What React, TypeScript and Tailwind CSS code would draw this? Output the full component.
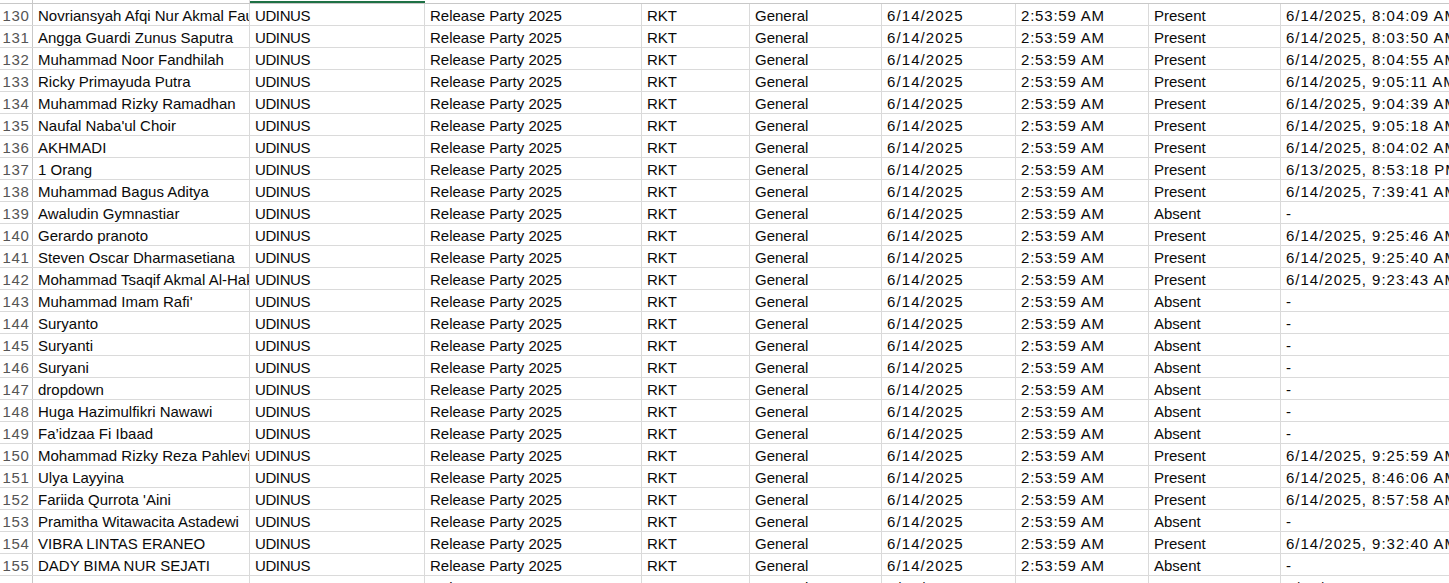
const COLS = [217, 175, 217, 108, 132, 134, 133, 132, 220];

type Row = [number, string, string];

const rows: Row[] = [
  [130, "Novriansyah Afqi Nur Akmal Fauzi", "6/14/2025, 8:04:09 AM"],
  [131, "Angga Guardi Zunus Saputra", "6/14/2025, 8:03:50 AM"],
  [132, "Muhammad Noor Fandhilah", "6/14/2025, 8:04:55 AM"],
  [133, "Ricky Primayuda Putra", "6/14/2025, 9:05:11 AM"],
  [134, "Muhammad Rizky Ramadhan", "6/14/2025, 9:04:39 AM"],
  [135, "Naufal Naba'ul Choir", "6/14/2025, 9:05:18 AM"],
  [136, "AKHMADI", "6/14/2025, 8:04:02 AM"],
  [137, "1 Orang", "6/13/2025, 8:53:18 PM"],
  [138, "Muhammad Bagus Aditya", "6/14/2025, 7:39:41 AM"],
  [139, "Awaludin Gymnastiar", "-"],
  [140, "Gerardo pranoto", "6/14/2025, 9:25:46 AM"],
  [141, "Steven Oscar Dharmasetiana", "6/14/2025, 9:25:40 AM"],
  [142, "Mohammad Tsaqif Akmal Al-Hakim", "6/14/2025, 9:23:43 AM"],
  [143, "Muhammad Imam Rafi'", "-"],
  [144, "Suryanto", "-"],
  [145, "Suryanti", "-"],
  [146, "Suryani", "-"],
  [147, "dropdown", "-"],
  [148, "Huga Hazimulfikri Nawawi", "-"],
  [149, "Fa’idzaa Fi Ibaad", "-"],
  [150, "Mohammad Rizky Reza Pahlevi", "6/14/2025, 9:25:59 AM"],
  [151, "Ulya Layyina", "6/14/2025, 8:46:06 AM"],
  [152, "Fariida Qurrota 'Aini", "6/14/2025, 8:57:58 AM"],
  [153, "Pramitha Witawacita Astadewi", "-"],
  [154, "VIBRA LINTAS ERANEO", "6/14/2025, 9:32:40 AM"],
  [155, "DADY BIMA NUR SEJATI", "-"],
  [156, "NAFIZAH ANBAR SYA'BANI", "6/14/2025, 8:58:48 AM"],
];

function Cell({ w, className = "", children }: { w: number; className?: string; children: React.ReactNode }) {
  return (
    <div
      className={`h-full shrink-0 overflow-hidden whitespace-nowrap border-r border-[#dadada] pl-[5px] pt-[1px] leading-[21px] ${className}`}
      style={{ width: w }}
    >
      {children}
    </div>
  );
}

export default function App() {
  return (
    <div className="h-[583px] w-[1449px] overflow-hidden bg-white font-['Liberation_Sans',Arial,sans-serif] text-[15px] text-[#0a0a0a]">
      {/* bottom edge of the column headers */}
      <div className="flex h-[4px] border-b border-[#c8c8c8]">
        <div className="w-[33px] shrink-0 border-r border-[#c8c8c8]" />
        <div className="w-[217px] shrink-0 border-r border-[#dadada]" />
        <div className="flex w-[175px] shrink-0 flex-col">
          <div className="h-[1px]" />
          <div className="h-[2px] bg-[#1e7145]" />
        </div>
        <div className="flex-1" />
      </div>
      {rows.map(([n, name, time]) => {
        const present = time !== "-";
        return (
          <div key={n} className="flex h-[22px] border-b border-[#dadada]">
            <div className="w-[33px] shrink-0 border-r border-[#c8c8c8] pt-[1px] text-center leading-[21px] tracking-[0.6px] text-[#555]">
              {n}
            </div>
            <Cell w={COLS[0]}>{name}</Cell>
            <Cell w={COLS[1]} className="tracking-[-0.4px]">UDINUS</Cell>
            <Cell w={COLS[2]}>Release Party 2025</Cell>
            <Cell w={COLS[3]}>RKT</Cell>
            <Cell w={COLS[4]}>General</Cell>
            <Cell w={COLS[5]} className="tracking-[1.1px]">6/14/2025</Cell>
            <Cell w={COLS[6]} className="tracking-[0.8px]">2:53:59 AM</Cell>
            <Cell w={COLS[7]}>{present ? "Present" : "Absent"}</Cell>
            <Cell w={COLS[8]} className="tracking-[1px]">{time}</Cell>
          </div>
        );
      })}
    </div>
  );
}
